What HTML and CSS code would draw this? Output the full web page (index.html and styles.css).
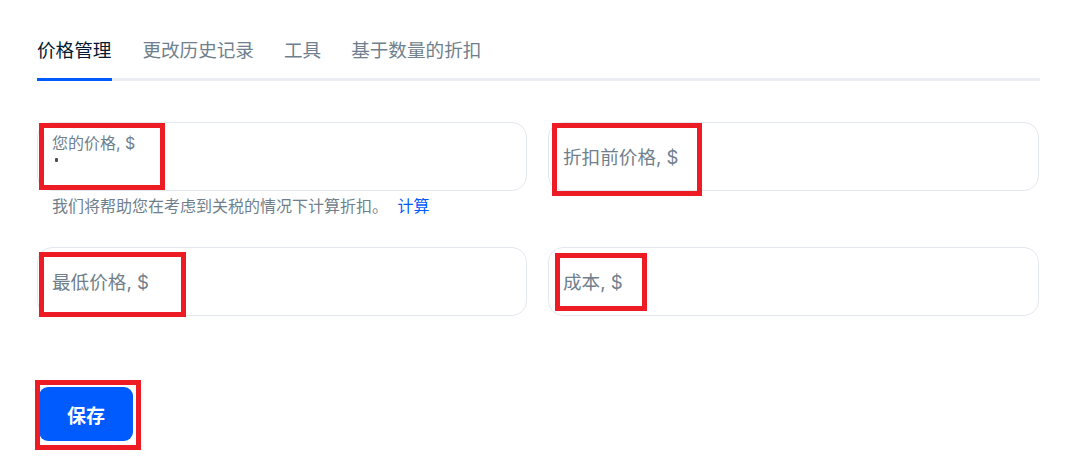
FILE: index.html
```html
<!DOCTYPE html>
<html lang="zh">
<head>
<meta charset="utf-8">
<link rel="stylesheet" href="styles.css">
</head>
<body>
<div class="page">
  <nav class="tabs">
    <div class="tab active">价格管理</div>
    <div class="tab">更改历史记录</div>
    <div class="tab">工具</div>
    <div class="tab">基于数量的折扣</div>
  </nav>

  <div class="form-grid">
    <div class="field">
      <div class="box filled">
        <span class="float-label">您的价格, $</span>
        <span class="caret"></span>
      </div>
      <div class="hint">我们将帮助您在考虑到关税的情况下计算折扣。 <a class="hint-link">计算</a></div>
    </div>
    <div class="field">
      <div class="box"><span class="placeholder">折扣前价格, $</span></div>
    </div>
    <div class="field">
      <div class="box"><span class="placeholder">最低价格, $</span></div>
    </div>
    <div class="field">
      <div class="box"><span class="placeholder">成本, $</span></div>
    </div>
  </div>

  <button class="save">保存</button>

  <div class="mark m1"></div>
  <div class="mark m2"></div>
  <div class="mark m3"></div>
  <div class="mark m4"></div>
  <div class="mark m5"></div>
</div>
</body>
</html>
```

FILE: styles.css
```css
* { box-sizing: border-box; }
html, body { margin: 0; padding: 0; background: #fff; }
body {
  font-family: Inter, "Noto Sans CJK SC", sans-serif;
  color: #001a34;
  width: 1082px;
  height: 470px;
  overflow: hidden;
}
.page {
  position: relative;
  padding: 38px 42px 0 37px;
  height: 470px;
}
.tabs {
  display: flex;
  gap: 30px;
  border-bottom: 3px solid #eaedf1;
}
.tab {
  font-size: 18.6px;
  line-height: 24px;
  padding-bottom: 16px;
  color: #707f8d;
}
.tab.active {
  color: #001a34;
  border-bottom: 3px solid #005bff;
  margin-bottom: -3px;
  padding-right: 1px;
}
.form-grid {
  margin-top: 41px;
  display: grid;
  grid-template-columns: 490px 491px;
  column-gap: 21px;
  row-gap: 31px;
}
.field { display: flex; flex-direction: column; }
.box {
  position: relative;
  height: 69px;
  border: 1px solid #e3e8ef;
  border-radius: 15px;
  display: flex;
  align-items: center;
  padding: 0 14px;
}
.box.filled {
  flex-direction: column;
  align-items: flex-start;
  justify-content: flex-start;
  padding-top: 10px;
}
.float-label {
  font-size: 16px;
  line-height: 20px;
  color: #707f8d;
}
.caret {
  margin-top: 5px;
  margin-left: 3px;
  width: 3px;
  height: 4px;
  border-radius: 1px;
  background: #4a4f55;
}
.placeholder {
  font-size: 18.6px;
  line-height: 24px;
  color: #707f8d;
  padding-top: 1px;
}
.hint {
  margin-top: 5px;
  padding-left: 15px;
  font-size: 16px;
  line-height: 20px;
  color: #707f8d;
}
.hint-link { color: #005bff; margin-left: 5px; }
.save {
  margin-top: 71px;
  margin-left: 2px;
  width: 94px;
  height: 54px;
  border: none;
  border-radius: 9px;
  background: #005bff;
  color: #fff;
  font-family: Inter, "Noto Sans CJK SC", sans-serif;
  font-size: 19px;
  font-weight: 700;
  display: flex;
  align-items: center;
  justify-content: center;
}
.mark {
  position: absolute;
  border: 5px solid #ed1c24;
}
.m1 { left: 39px; top: 123px; width: 126px; height: 67px; }
.m2 { left: 552px; top: 123px; width: 150px; height: 73px; }
.m3 { left: 39px; top: 252px; width: 147px; height: 65px; }
.m4 { left: 555px; top: 253px; width: 92px; height: 58px; }
.m5 { left: 35px; top: 380px; width: 106px; height: 70px; }
```
